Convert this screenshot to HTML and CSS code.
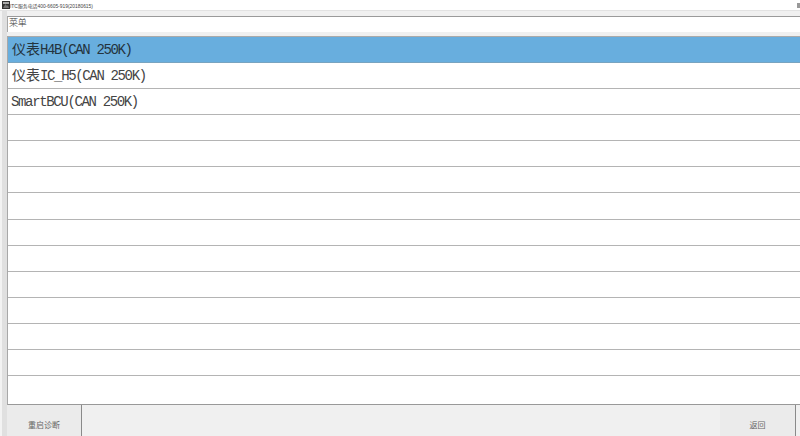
FILE: index.html
```html
<!DOCTYPE html>
<html lang="zh">
<head>
<meta charset="utf-8">
<title>菜单</title>
<link rel="stylesheet" href="styles.css">
</head>
<body>
<div class="app">
  <header class="titlebar">
    <svg class="appicon" width="8" height="8" viewBox="0 0 8 8"><rect width="8" height="8" fill="#333"/><rect x="1" y="1" width="6" height="2" fill="#aaa"/><path d="M1 7 L3.5 3 L5 5 L6 4 L7 7 Z" fill="#777"/></svg>
    <span class="titletext">ITC服务电话400-6605-919(20180615)</span>
    <span class="winbtn"></span>
  </header>
  <div class="menubar"><span class="menulabel">菜单</span></div>
  <main class="list">
    <div class="row selected"><span class="cjk">仪表</span><span class="lat">H4B(CAN 250K)</span></div>
    <div class="row"><span class="cjk">仪表</span><span class="lat">IC_H5(CAN 250K)</span></div>
    <div class="row row-latin"><span class="lat">SmartBCU(CAN 250K)</span></div>
    <div class="row"></div><div class="row"></div><div class="row"></div><div class="row"></div>
    <div class="row"></div><div class="row"></div><div class="row"></div><div class="row"></div>
    <div class="row"></div><div class="row"></div><div class="row last"></div>
  </main>
  <footer class="bottombar">
    <div class="btn btn-left">重启诊断</div>
    <div class="btn btn-right">返回</div>
    <div class="edge"></div>
  </footer>
</div>
</body>
</html>
```
FILE: styles.css
```css
html, body { margin: 0; padding: 0; }
body { width: 800px; height: 436px; overflow: hidden; background: #f0f0f0; }
.app { width: 800px; height: 436px; display: flex; flex-direction: column; font-family: "Liberation Mono", "Noto Sans CJK SC", monospace; color: #333; background: linear-gradient(90deg, #f3f3f3 0, #f3f3f3 2px, #e0e0e0 2px, #e0e0e0 7px, #f0f0f0 7px); }
.titlebar { height: 10px; background: #fff; display: flex; align-items: center; gap: 0; padding-left: 2px; flex: none; border-bottom: 1px solid #e2e2e2; }
.appicon { flex: none; }
.titletext { font-size: 4.9px; color: #444; white-space: nowrap; font-family: "Liberation Sans", "Noto Sans CJK SC", sans-serif; }
.winbtn { width: 3px; height: 5px; margin-left: auto; background: #999; }
.menubar { height: 15px; margin: 5px 0 4px 7px; background: #fff; border-top: 1px solid #9a9a9a; border-left: 1px solid #a8a8a8; flex: none; }
.menulabel { display: block; font-size: 9px; line-height: 11px; padding-left: 1px; letter-spacing: -0.3px; font-family: "Noto Sans CJK SC", sans-serif; font-weight: 300; }
.list { height: 367px; margin-left: 7px; background: #fff; border-left: 1px solid #a8a8a8; border-top: 1px solid #aaa; border-bottom: 1px solid #999; flex: none; display: flex; flex-direction: column; }
.row { height: 25.08px; line-height: 26px; flex: none; border-bottom: 1px solid #b4b4b4; padding-left: 4px; font-size: 14px; color: #444; white-space: nowrap; }
.row-latin { padding-left: 3px; }
.row.last { flex: 1; border-bottom: 0; }
.row.selected { background: #68aede; color: #24343f; border-bottom-color: #78a4c0; }
.cjk { font-family: "Noto Sans CJK SC", sans-serif; font-weight: 400; font-size: 14px; line-height: 1; }
.lat { font-size: 14px; letter-spacing: -1.35px; }
.bottombar { flex: 1; display: flex; align-items: stretch; padding-left: 7px; }
.btn { display: flex; align-items: center; justify-content: center; font-size: 8px; color: #666; font-family: "Noto Sans CJK SC", sans-serif; padding-top: 8px; background: #ebebeb; box-sizing: border-box; }
.btn-left { width: 75px; border-right: 1px solid #8a8a8a; }
.btn-right { width: 76px; margin-left: auto; border-right: 1px solid #8a8a8a; }
.edge { width: 4px; }
```
